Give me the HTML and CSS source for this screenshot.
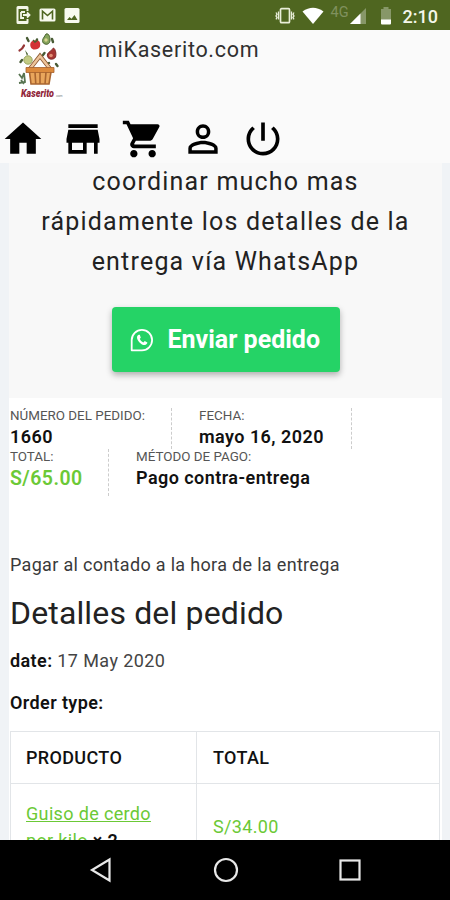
FILE: index.html
```html
<!DOCTYPE html>
<html lang="es">
<head>
<meta charset="utf-8">
<title>miKaserito.com</title>
<link rel="stylesheet" href="styles.css">
</head>
<body>
<div class="phone">
  <div class="status">
    <div class="status-left">
      <svg width="16" height="20" viewBox="0 0 16 20"><path d="M3 1h9a1.500 1.500 0 0 1 1.500 1.500V6h-2V4H3.500v12h8v-2h2v3.500A1.500 1.500 0 0 1 12 19H3a1.500 1.500 0 0 1-1.500-1.500v-15A1.500 1.500 0 0 1 3 1z" fill="#f3f6e8"/><path d="M6 7h4M6 7v6h3M8 10h6M12 7.500l2.500 2.500-2.500 2.500" fill="none" stroke="#f3f6e8" stroke-width="1.800"/></svg>
      <svg width="17" height="14" viewBox="0 0 17 14"><rect x=".5" y=".5" width="16" height="13" rx="1.500" fill="#f8faef"/><path d="M3.500 11.500V3.200l5 4.300 5-4.300v8.300" fill="none" stroke="#4f6620" stroke-width="1.600"/></svg>
      <svg width="16" height="15" viewBox="0 0 16 15"><rect x=".5" y="0" width="15" height="15" rx="1.500" fill="#f8faef"/><path d="M3 12l2.500-3 2 1.800L10.500 7l3 5z" fill="#4f6620"/></svg>
    </div>
    <div class="status-right">
      <svg class="vibrate" width="20" height="18" viewBox="0 0 20 18" fill="none" stroke="#e9eed9" stroke-width="1.700"><rect x="5.500" y="1.700" width="9" height="14" rx="1"/><path d="M3.500 4.500v8M1 5.500l1 1.700-1 1.700 1 1.700-1 1.700M16.500 4.500v8M19 5.500l-1 1.700 1 1.700-1 1.700 1 1.700" stroke-width="1.300"/></svg>
      <svg class="wifi" width="22" height="18" viewBox="0 0 22 18"><path d="M.5 4.500Q11-3 21.500 4.500L11 17z" fill="#fff"/></svg>
      <span class="net">4G</span>
      <svg class="signal" width="16" height="16" viewBox="0 0 16 16"><path d="M16 0v16H0z" fill="#879768"/><path d="M10.500 5.500V16H0z" fill="#fff"/></svg>
      <svg class="battery" width="12" height="18" viewBox="0 0 12 18"><path d="M3.500 0h5v2H11v11H1V2h2.500z" fill="#879768"/><path d="M1 12.500h10V16.500a1 1 0 0 1-1 1H2a1 1 0 0 1-1-1z" fill="#fff"/></svg>
      <span class="clock">2:10</span>
    </div>
  </div>

  <header class="header">
    <div class="brand">
      <div class="logo">
        <svg width="80" height="79" viewBox="0 0 80 79">
          <g fill="none" stroke="#485b35" stroke-width="2.400" stroke-linecap="round">
            <path d="M27 8l1.500 3M37 9.500l-1 3M52 9l1 3M20.500 32l1.500-2M56 34l1.500 2M44.500 23l-1.500 2M47 34l2-1"/>
          </g>
          <path d="M19.500 20.500q3-1.500 4.500-5" fill="none" stroke="#963636" stroke-width="2.200" stroke-linecap="round"/>
          <path d="M35 10.500c4-1 6 2 5 6-1 3-8 5-9.500 0-1-4 1.500-6.500 4.500-6z" fill="#d23336"/>
          <path d="M33 10l2 2 3-2" fill="none" stroke="#496330" stroke-width="1.400"/>
          <path d="M46 4c3-1 4 3 4 6s-2 5-5 4-3-4-1.500-6z" fill="#86a45c" stroke="#496330"/>
          <circle cx="46" cy="10" r="1.700" fill="#d7d590"/>
          <path d="M53.500 18c2 1 3 6 2 9-1.500 3-7 3-8-.5-1-4 3-4.500 6-8.500z" fill="#a63532" stroke="#7e2928"/>
          <circle cx="51" cy="25.500" r="1.800" fill="#e28e74"/>
          <path d="M25 20l3 4-1 2z" fill="#496330"/>
          <circle cx="28" cy="30" r="4.200" fill="#c3cb83" stroke="#9ba762"/>
          <path d="M29 40l11-14 11 14" fill="none" stroke="#8d5932" stroke-width="4.200"/>
          <path d="M29 40l11-14 11 14" fill="none" stroke="#edc49a" stroke-width="2.600"/>
          <path d="M29 42l2 12h18l2-12z" fill="#e9a65c"/>
          <path d="M26 37.500h28v5H26z" fill="#dc8a3c" stroke="#a4602c" stroke-width=".8"/>
          <path d="M29.500 42l1.500 12h18l2-12M35 42l.8 12M40 42v12M46 42l-1 12" fill="none" stroke="#a96530" stroke-width="1.600"/>
          <path d="M19 44l3 4 2-5 1 9-6 1M21 50l3 4" fill="none" stroke="#587451" stroke-width="1.800"/>
          <text x="21" y="67" class="logo-name" textLength="33" lengthAdjust="spacingAndGlyphs">Kaserito</text>
          <text x="55.500" y="67" class="logo-com" textLength="7" lengthAdjust="spacingAndGlyphs">.com</text>
        </svg>
      </div>
      <div class="site">miKaserito.com</div>
    </div>
    <nav class="nav">
      <svg viewBox="0 0 24 24"><path d="M10 20v-6h4v6h5v-8h3L12 3 2 12h3v8z"/></svg>
      <svg viewBox="0 0 24 24"><path d="M20 4H4v2h16V4zm1 10v-2l-1-5H4l-1 5v2h1v6h10v-6h4v6h2v-6h1zm-9 4H6v-4h6v4z"/></svg>
      <svg viewBox="0 0 24 24"><path d="M7 18c-1.100 0-1.990.9-1.990 2S5.900 22 7 22s2-.9 2-2-.9-2-2-2zM1 2v2h2l3.600 7.590-1.350 2.450c-.16.280-.25.610-.25.960 0 1.100.9 2 2 2h12v-2H7.420c-.14 0-.25-.11-.25-.25l.03-.12.9-1.630h7.450c.75 0 1.410-.41 1.750-1.030l3.580-6.490c.08-.14.120-.31.120-.48 0-.55-.45-1-1-1H5.210l-.94-2H1zm16 16c-1.100 0-1.990.9-1.990 2s.89 2 1.990 2 2-.9 2-2-.9-2-2-2z"/></svg>
      <svg viewBox="0 0 24 24"><path d="M12 5.900a2.100 2.100 0 1 1 0 4.200 2.100 2.100 0 0 1 0-4.200m0 9c2.970 0 6.100 1.460 6.100 2.100v1.100H5.900V17c0-.64 3.130-2.100 6.100-2.100M12 4C9.790 4 8 5.790 8 8s1.790 4 4 4 4-1.790 4-4-1.790-4-4-4zm0 9c-2.670 0-8 1.340-8 4v3h16v-3c0-2.660-5.330-4-8-4z"/></svg>
      <svg viewBox="0 0 24 24"><path d="M13 3h-2v10h2V3zm4.830 2.170l-1.420 1.420C17.990 7.860 19 9.810 19 12c0 3.870-3.130 7-7 7s-7-3.130-7-7c0-2.190 1.010-4.140 2.580-5.420L6.170 5.170C4.230 6.820 3 9.260 3 12c0 4.970 4.030 9 9 9s9-4.030 9-9c0-2.740-1.230-5.180-3.170-6.830z"/></svg>
    </nav>
  </header>

  <main class="page">
    <div class="content">
      <section class="send">
        <p class="intro">coordinar mucho mas<br>rápidamente los detalles de la<br>entrega vía WhatsApp</p>
        <button class="wa">
          <svg width="24" height="24" viewBox="0 0 24 24"><path d="M1.700 22.300V12A10.200 10.200 0 1 1 12 22.300z" fill="none" stroke="#fff" stroke-width="1.800" stroke-linejoin="round"/><path d="M8.800 6.800c-.5 0-1.800.9-1.800 2.600 0 3.300 4.300 7.600 7.600 7.600 1.700 0 2.800-1.300 2.800-2.400l-2.700-1.500-1.300 1.300c-1.700-.7-3-2-3.600-3.600l1-1.100-1-2.900z" fill="#fff"/></svg>
          <span>Enviar pedido</span>
        </button>
      </section>

      <ul class="facts">
        <li class="fact f-number"><span class="label">NÚMERO DEL PEDIDO:</span><strong>1660</strong></li>
        <li class="fact f-date"><span class="label">FECHA:</span><strong>mayo 16, 2020</strong></li>
      </ul>
      <ul class="facts second">
        <li class="fact f-total"><span class="label">TOTAL:</span><strong class="price">S/65.00</strong></li>
        <li class="fact f-method"><span class="label">MÉTODO DE PAGO:</span><strong>Pago contra-entrega</strong></li>
      </ul>

      <p class="pay">Pagar al contado a la hora de la entrega</p>
      <h2 class="title">Detalles del pedido</h2>
      <p class="meta"><b>date:</b> 17 May 2020</p>
      <p class="meta type"><b>Order type:</b></p>

      <div class="table">
        <div class="cell head">PRODUCTO</div>
        <div class="cell head">TOTAL</div>
        <div class="cell product"><div><a>Guiso de cerdo<br>por kilo</a> <b>× 2</b></div></div>
        <div class="cell amount">S/34.00</div>
      </div>
    </div>
  </main>

  <div class="keys">
    <svg width="24" height="26" viewBox="0 0 24 26"><path d="M20.500 2.500v21L3 13z"/></svg>
    <svg width="26" height="26" viewBox="0 0 26 26"><circle cx="13" cy="13" r="11"/></svg>
    <svg width="22" height="22" viewBox="0 0 22 22"><rect x="1.500" y="1.500" width="19" height="19"/></svg>
  </div>
</div>
</body>
</html>
```
FILE: styles.css
```css
* { box-sizing: border-box; margin: 0; padding: 0; }
body { font-family: Roboto, sans-serif; color: #222; background: #fafafa; }
svg { display: block; flex: none; }

.phone { width: 450px; height: 900px; display: flex; flex-direction: column; overflow: hidden; }

.status { height: 30px; flex: none; background: #4f6620; display: flex; justify-content: space-between; align-items: center; padding: 0 12px 0 15px; }
.status-left { display: flex; align-items: center; gap: 8px; }
.status-right { display: flex; align-items: center; }
.vibrate { margin-top: 1px; }
.wifi { margin: 2px 0 0 7px; }
.net { font-size: 14.500px; line-height: 18px; color: #80915e; margin: -5px 1px 0 7px; }
.signal { margin-top: 2px; }
.battery { margin: 1px 0 0 14px; }
.clock { font-size: 18px; font-weight: 500; color: #f4f7ea; margin-left: 11px; padding-top: 3px; line-height: 22px; }

.header { height: 133px; flex: none; background: #fafafa; }
.brand { display: flex; height: 87px; }
.logo { width: 80px; height: 80px; background: #fff; }
.logo-name { font: italic 900 11px Roboto, sans-serif; fill: #91273a; }
.logo-com { font: 4px Roboto, sans-serif; fill: #777; }
.site { font-size: 21.500px; line-height: 26px; letter-spacing: .7px; margin: 7px 0 0 18px; color: #303030; }
.nav { display: flex; gap: 16px; padding-left: 1px; }
.nav svg { width: 44px; height: 44px; fill: #000; }

.page { height: 677px; flex: none; overflow: hidden; background: #f0f3f6; padding: 0 8px 0 9px; }
.content { background: #fff; height: 100%; }

.send { height: 235px; background: #f8f8f8; display: flex; flex-direction: column; align-items: center; }
.intro { font-size: 25px; line-height: 40px; letter-spacing: 1.200px; text-align: center; white-space: nowrap; margin-top: -1px; color: #222; }
.wa { width: 228px; height: 65px; margin-top: 25px; border: 0; border-radius: 4px; background: #25d366; box-shadow: 0 3px 6px rgba(0,0,0,.3); display: flex; align-items: center; padding-left: 18px; gap: 14px; color: #fff; font: 700 25px Roboto, sans-serif; white-space: nowrap; }

.facts { list-style: none; display: flex; padding-left: 1px; margin-top: 10px; height: 41px; }
.facts.second { margin-top: 0; height: 47px; }
.fact { display: flex; flex-direction: column; white-space: nowrap; border-right: 1px dashed #ccc; }
.label { font-size: 13.400px; line-height: 15px; color: #555; }
.fact strong { font-size: 18px; line-height: 27px; letter-spacing: .45px; font-weight: 600; color: #111; }
.fact .price { color: #6bc936; font-size: 19.500px; line-height: 30px; }
.f-number { width: 162px; }
.f-date { width: 153px; margin-left: 27px; }
.f-total { width: 99px; }
.f-method { margin-left: 27px; border-right: 0; }

.pay { margin: 57px 0 0 1px; font-size: 18px; line-height: 24px; letter-spacing: .32px; color: #3a3a3a; }
.title { margin: 15px 0 0 1px; font-size: 32px; line-height: 42px; letter-spacing: .15px; font-weight: 400; color: #222; }
.meta { margin: 15px 0 0 1px; font-size: 18px; line-height: 24px; letter-spacing: .4px; color: #444; }
.meta b { font-weight: 600; color: #111; }
.meta.type { margin-top: 18px; }

.table { display: grid; grid-template-columns: 186px 243px; grid-template-rows: 52px 86px; margin: 16px 0 0 1px; width: 430px; border-top: 1px solid #e2e5e8; border-left: 1px solid #e2e5e8; }
.cell { border-right: 1px solid #e2e5e8; border-bottom: 1px solid #e2e5e8; padding-left: 15px; display: flex; align-items: center; font-size: 18px; line-height: 27px; letter-spacing: .35px; white-space: nowrap; }
.cell + .cell { padding-left: 16px; }
.cell.product { padding-left: 15px; }
.head { font-weight: 500; color: #111; }
.cell a { color: #6bc936; text-decoration: underline; }
.cell b { font-weight: 600; color: #111; }
.amount { color: #6bc936; }

.keys { height: 60px; flex: none; background: #000; display: flex; align-items: center; justify-content: space-between; padding: 0 89px; }
.keys svg { fill: none; stroke: #e8e8e8; stroke-width: 2.200; }
```
